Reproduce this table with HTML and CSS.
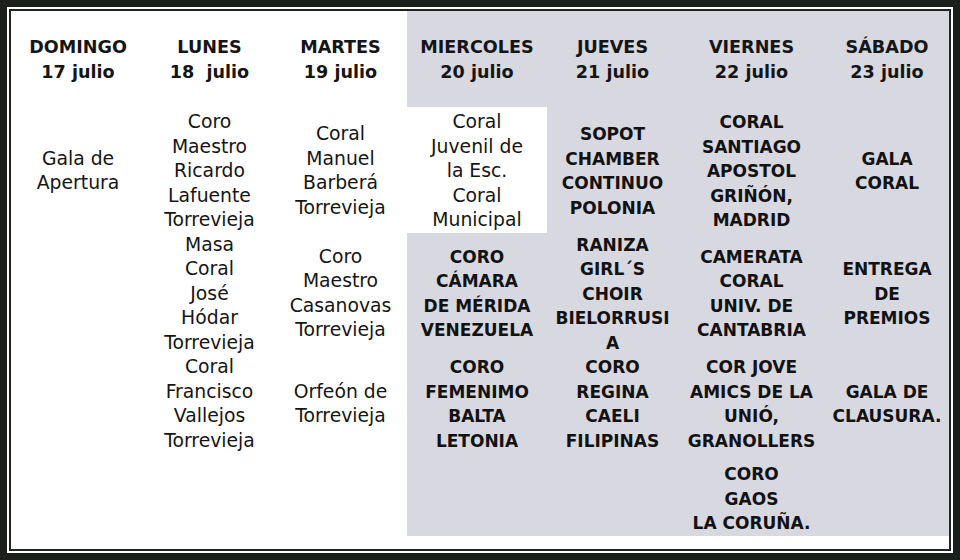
FILE: index.html
```html
<!DOCTYPE html>
<html lang="es">
<head>
<meta charset="utf-8">
<title>Programa</title>
<link rel="stylesheet" href="styles.css">
</head>
<body>
<div class="frame">
  <div class="inner">
    <div class="grid">
      <div class="cell head">DOMINGO<br>17 julio</div>
      <div class="cell head">LUNES<br>18&nbsp; julio</div>
      <div class="cell head">MARTES<br>19 julio</div>
      <div class="cell head gray">MIERCOLES<br>20 julio</div>
      <div class="cell head gray">JUEVES<br>21 julio</div>
      <div class="cell head gray">VIERNES<br>22 julio</div>
      <div class="cell head gray">SÁBADO<br>23 julio</div>

      <div class="cell r2">Gala de<br>Apertura</div>
      <div class="cell r2">Coro<br>Maestro<br>Ricardo<br>Lafuente<br>Torrevieja</div>
      <div class="cell r2">Coral<br>Manuel<br>Barberá<br>Torrevieja</div>
      <div class="cell r2 white">Coral<br>Juvenil de<br>la Esc.<br>Coral<br>Municipal</div>
      <div class="cell r2 gray bold">SOPOT<br>CHAMBER<br>CONTINUO<br>POLONIA</div>
      <div class="cell r2 gray bold">CORAL<br>SANTIAGO<br>APOSTOL<br>GRIÑÓN,<br>MADRID</div>
      <div class="cell r2 gray bold">GALA<br>CORAL</div>

      <div class="cell"></div>
      <div class="cell">Masa<br>Coral<br>José<br>Hódar<br>Torrevieja</div>
      <div class="cell">Coro<br>Maestro<br>Casanovas<br>Torrevieja</div>
      <div class="cell gray bold">CORO<br>CÁMARA<br>DE MÉRIDA<br>VENEZUELA</div>
      <div class="cell gray bold">RANIZA<br>GIRL´S<br>CHOIR<br>BIELORRUSI<br>A</div>
      <div class="cell gray bold">CAMERATA<br>CORAL<br>UNIV. DE<br>CANTABRIA</div>
      <div class="cell gray bold">ENTREGA<br>DE<br>PREMIOS</div>

      <div class="cell"></div>
      <div class="cell">Coral<br>Francisco<br>Vallejos<br>Torrevieja</div>
      <div class="cell">Orfeón de<br>Torrevieja</div>
      <div class="cell gray bold">CORO<br>FEMENIMO<br>BALTA<br>LETONIA</div>
      <div class="cell gray bold">CORO<br>REGINA<br>CAELI<br>FILIPINAS</div>
      <div class="cell gray bold">COR JOVE<br>AMICS DE LA<br>UNIÓ,<br>GRANOLLERS</div>
      <div class="cell gray bold">GALA DE<br>CLAUSURA.</div>

      <div class="cell r5"></div>
      <div class="cell r5"></div>
      <div class="cell r5"></div>
      <div class="cell r5 gray"></div>
      <div class="cell r5 gray"></div>
      <div class="cell r5 gray bold">CORO<br>GAOS<br>LA CORUÑA.</div>
      <div class="cell r5 gray"></div>
    </div>
  </div>
</div>
</body>
</html>
```
FILE: styles.css
```css
html, body {
  margin: 0;
  padding: 0;
  background: #ffffff;
}
body {
  width: 960px;
  height: 560px;
  overflow: hidden;
  font-family: "DejaVu Sans", "Liberation Sans", sans-serif;
  color: #151515;
}
.frame {
  box-sizing: border-box;
  width: 960px;
  height: 560px;
  border: 7px solid #1b201d;
  padding: 2px;
  background: #ffffff;
}
.inner {
  box-sizing: border-box;
  height: 100%;
  border: 2px solid #1f2321;
}
.grid {
  display: grid;
  height: 100%;
  grid-template-columns: 134px 129px 133px 140px 131px 147px 1fr;
  grid-template-rows: auto auto auto auto auto 1fr;
}
.cell {
  display: flex;
  flex-direction: column;
  justify-content: center;
  text-align: center;
  font-size: 18.8px;
  line-height: 24.5px;
  background: #ffffff;
}
.head {
  font-weight: bold;
  font-size: 17.6px;
  line-height: 25px;
  padding: 24px 0 22px;
  justify-content: flex-start;
}
.r2 {
  padding-top: 3px;
}
.r5 {
  padding-top: 9px;
  justify-content: flex-start;
}
.gray {
  background: #d8d8e0;
}
.white {
  background: #ffffff;
}
.bold {
  font-weight: bold;
  font-size: 17px;
  color: #121212;
}
```
